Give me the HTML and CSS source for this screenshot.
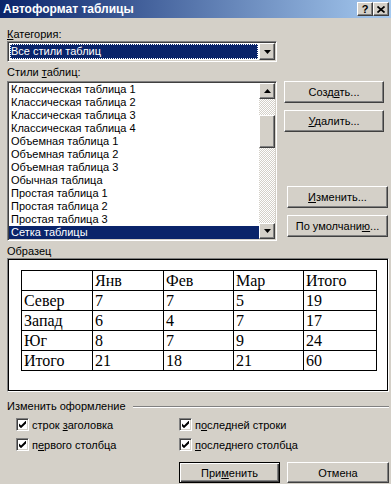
FILE: index.html
```html
<!DOCTYPE html>
<html lang="ru">
<head>
    <meta charset="UTF-8">
    <title>Автоформат таблицы</title>
    <link rel="stylesheet" href="styles.css">
</head>
<body>

<div class="titlebar">
    <span class="title">Автоформат таблицы</span>
    <div class="caption-btns">
        <span class="cap-btn">?</span>
        <span class="cap-btn">
            <svg width="8" height="7" viewBox="0 0 8 7"><path d="M0.5 0.5 L7.5 6.5 M7.5 0.5 L0.5 6.5" stroke="#000" stroke-width="1.7"/></svg>
        </span>
    </div>
</div>

<div class="dialog">
    <div class="top">
        <div class="lbl"><u>К</u>атегория:</div>
        <div class="combo sunken">
            <div class="combo-value">Все стили таблиц</div>
            <div class="drop-btn raised">
                <svg width="7" height="4" viewBox="0 0 7 4"><path d="M0 0 H7 L3.5 4 Z" fill="#000"/></svg>
            </div>
        </div>
        <div class="lbl lbl-styles">Стили <u>т</u>аблиц:</div>
        <div class="listbox sunken">
            <ul class="items">
                <li>Классическая таблица 1</li>
                <li>Классическая таблица 2</li>
                <li>Классическая таблица 3</li>
                <li>Классическая таблица 4</li>
                <li>Объемная таблица 1</li>
                <li>Объемная таблица 2</li>
                <li>Объемная таблица 3</li>
                <li>Обычная таблица</li>
                <li>Простая таблица 1</li>
                <li>Простая таблица 2</li>
                <li>Простая таблица 3</li>
                <li class="selected">Сетка таблицы</li>
            </ul>
            <div class="scrollbar">
                <div class="sb-btn raised">
                    <svg width="7" height="4" viewBox="0 0 7 4"><path d="M0 4 H7 L3.5 0 Z" fill="#000"/></svg>
                </div>
                <div class="sb-track">
                    <div class="sb-thumb raised"></div>
                </div>
                <div class="sb-btn raised">
                    <svg width="7" height="4" viewBox="0 0 7 4"><path d="M0 0 H7 L3.5 4 Z" fill="#000"/></svg>
                </div>
            </div>
        </div>
        <div class="side">
            <div class="btn raised"><span>Созд<u>а</u>ть...</span></div>
            <div class="btn raised"><span><u>У</u>далить...</span></div>
            <div class="btn raised btn-lower btn-push"><span><u>И</u>зменить...</span></div>
            <div class="btn raised btn-lower"><span>По умолчани<u>ю</u>...</span></div>
        </div>
    </div>

    <div class="lbl lbl-sample">Образец</div>
    <div class="preview">
        <table class="sample">
            <colgroup>
                <col style="width: 71px">
                <col style="width: 71px">
                <col style="width: 70px">
                <col style="width: 70px">
                <col>
            </colgroup>
            <tr><td></td><td>Янв</td><td>Фев</td><td>Мар</td><td>Итого</td></tr>
            <tr><td>Север</td><td>7</td><td>7</td><td>5</td><td>19</td></tr>
            <tr><td>Запад</td><td>6</td><td>4</td><td>7</td><td>17</td></tr>
            <tr><td>Юг</td><td>8</td><td>7</td><td>9</td><td>24</td></tr>
            <tr><td>Итого</td><td>21</td><td>18</td><td>21</td><td>60</td></tr>
        </table>
    </div>

    <div class="group-title">Изменить оформление</div>
    <div class="checks">
        <div class="check">
            <span class="box sunken"><svg width="7" height="7" viewBox="0 0 7 7"><path d="M0 2.5 L2 4.5 L7 -0.5 L7 2.5 L2 7.2 L0 5.2 Z" fill="#000"/></svg></span>
            <span>строк <u>з</u>аголовка</span>
        </div>
        <div class="check">
            <span class="box sunken"><svg width="7" height="7" viewBox="0 0 7 7"><path d="M0 2.5 L2 4.5 L7 -0.5 L7 2.5 L2 7.2 L0 5.2 Z" fill="#000"/></svg></span>
            <span>п<u>о</u>следней строки</span>
        </div>
        <div class="check">
            <span class="box sunken"><svg width="7" height="7" viewBox="0 0 7 7"><path d="M0 2.5 L2 4.5 L7 -0.5 L7 2.5 L2 7.2 L0 5.2 Z" fill="#000"/></svg></span>
            <span>п<u>е</u>рвого столбца</span>
        </div>
        <div class="check">
            <span class="box sunken"><svg width="7" height="7" viewBox="0 0 7 7"><path d="M0 2.5 L2 4.5 L7 -0.5 L7 2.5 L2 7.2 L0 5.2 Z" fill="#000"/></svg></span>
            <span><u>п</u>оследнего столбца</span>
        </div>
    </div>

    <div class="actions">
        <div class="btn btn-default"><span>При<u>м</u>енить</span></div>
        <div class="btn raised btn-cancel">Отмена</div>
    </div>
</div>

</body>
</html>
```

FILE: styles.css
```css
body {
    margin: 0;
    width: 391px;
    height: 484px;
    overflow: hidden;
    background: #d4d0c8;
    font-family: "Liberation Sans", Arial, sans-serif;
    font-size: 11px;
    color: #000;
}
u {
    text-decoration: underline;
    text-underline-offset: 1px;
}
.raised {
    box-sizing: border-box;
    background: #d4d0c8;
    border: 1px solid;
    border-color: #fff #404040 #404040 #fff;
    box-shadow: inset -1px -1px #808080;
}
.sunken {
    box-sizing: border-box;
    border: 1px solid;
    border-color: #808080 #fff #fff #808080;
    box-shadow: inset 1px 1px #404040, inset -1px -1px #d4d0c8;
    padding: 1px;
    background: #fff;
}
.titlebar {
    height: 18px;
    display: flex;
    align-items: center;
    justify-content: space-between;
    padding: 0 2px 0 3px;
    background: linear-gradient(to right, #0a246a, #a6caf0);
}
.title {
    color: #fff;
    font-weight: bold;
    font-size: 12px;
}
.caption-btns {
    display: flex;
}
.cap-btn {
    width: 16px;
    height: 14px;
    box-sizing: border-box;
    background: #d4d0c8;
    border: 1px solid;
    border-color: #fff #404040 #404040 #fff;
    box-shadow: inset -1px -1px #808080;
    display: flex;
    align-items: center;
    justify-content: center;
    font-weight: bold;
    font-size: 11px;
    line-height: 1;
}
.dialog {
    padding: 0 2px 0 7px;
}
.top {
    display: grid;
    grid-template-columns: 270px 1fr;
    column-gap: 7px;
    padding-top: 10px;
}
.lbl {
    grid-column: 1;
    line-height: 13px;
}
.lbl-styles {
    margin-top: 4px;
    margin-bottom: 2px;
}
.combo {
    grid-column: 1;
    height: 21px;
    display: flex;
}
.combo-value {
    flex: 1;
    margin: 1px;
    padding-left: 1px;
    background: #0a246a;
    color: #fff;
    line-height: 15px;
    outline: 1px dotted #fff;
    outline-offset: -1px;
}
.drop-btn {
    width: 16px;
    display: flex;
    align-items: center;
    justify-content: center;
}
.listbox {
    grid-column: 1;
    grid-row: 4;
    height: 160px;
    display: flex;
}
.items {
    flex: 1;
    list-style: none;
    margin: 0;
    padding: 0;
}
.items li {
    line-height: 13px;
    padding-left: 2px;
    white-space: nowrap;
}
.items li.selected {
    background: #0a246a;
    color: #fff;
}
.scrollbar {
    width: 16px;
    display: flex;
    flex-direction: column;
}
.sb-btn {
    height: 16px;
    display: flex;
    align-items: center;
    justify-content: center;
}
.sb-track {
    flex: 1;
    background-color: #fff;
    background-image: repeating-conic-gradient(#d4d0c8 0 25%, #fff 0 50%);
    background-size: 2px 2px;
}
.sb-thumb {
    margin-top: 16px;
    height: 33px;
}
.side {
    grid-column: 2;
    grid-row: 4;
    display: flex;
    flex-direction: column;
    gap: 7px;
    padding-bottom: 4px;
}
.btn {
    height: 22px;
    display: flex;
    align-items: center;
    justify-content: center;
    white-space: nowrap;
}
.side .btn {
    width: 100px;
}
.side .btn-lower {
    width: 101px;
    margin-left: 3px;
}
.btn-push {
    margin-top: auto;
}
.lbl-sample {
    margin-top: 4px;
}
.preview {
    height: 134px;
    box-sizing: border-box;
    background: #fff;
    border: 1px solid;
    border-color: #808080 #fff #fff #808080;
    box-shadow: inset 1px 1px #000, inset -1px -1px #000;
    padding: 11px 0 0 13px;
}
.sample {
    border-collapse: collapse;
    table-layout: fixed;
    width: 356px;
    font-family: "Liberation Serif", "Times New Roman", serif;
    font-size: 16px;
}
.sample td {
    border: 1px solid #000;
    height: 19px;
    padding: 0 0 0 2px;
    line-height: 19px;
    white-space: nowrap;
}
.group-title {
    display: flex;
    align-items: center;
    margin-top: 8px;
    line-height: 13px;
}
.group-title::after {
    content: "";
    flex: 1;
    border-top: 1px solid #808080;
    border-bottom: 1px solid #fff;
    margin-left: 7px;
}
.checks {
    display: grid;
    grid-template-columns: 163px 1fr;
    row-gap: 7px;
    margin-top: 5px;
    padding-left: 9px;
}
.check {
    display: flex;
    align-items: center;
    gap: 3px;
    height: 13px;
    white-space: nowrap;
}
.box {
    width: 13px;
    height: 13px;
    display: flex;
    align-items: center;
    justify-content: center;
    flex-shrink: 0;
}
.actions {
    display: flex;
    justify-content: flex-end;
    gap: 7px;
    margin-top: 11px;
}
.actions .btn {
    height: 21px;
}
.btn-default {
    width: 101px;
    box-sizing: border-box;
    background: #d4d0c8;
    border: 1px solid #000;
    box-shadow: inset 1px 1px #fff, inset -1px -1px #404040, inset -2px -2px #808080;
}
.btn-cancel {
    width: 102px;
}
```
